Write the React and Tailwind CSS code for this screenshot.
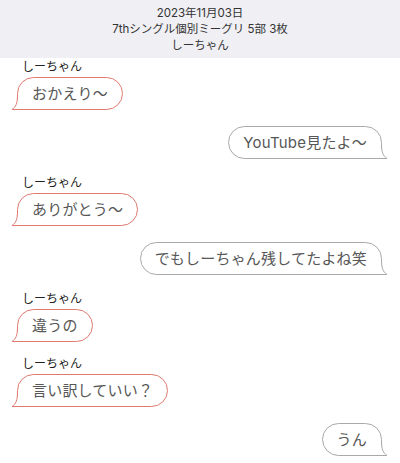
import React from "react";

const messages = [
  { from: "her", text: "おかえり〜" },
  { from: "me", text: "YouTube見たよ〜" },
  { from: "her", text: "ありがとう〜" },
  { from: "me", text: "でもしーちゃん残してたよね笑" },
  { from: "her", text: "違うの" },
  { from: "her", text: "言い訳していい？" },
  { from: "me", text: "うん" },
];

function Tail({ color, side }) {
  // flared corner that turns the pill's bottom corner into a speech tail
  const pos = side === "left" ? "left-[-7px]" : "right-[-7px] -scale-x-100";
  return (
    <svg
      className={`absolute bottom-[-1px] ${pos}`}
      width="10"
      height="15"
      viewBox="0 0 10 15"
    >
      <path d="M6.5 0 C6.5 8 5 12 1 14.5 L10 14.5 L10 0 Z" fill="white" />
      <path d="M6.5 0 C6.5 8 5 12 1 14.5 L10 14.5" fill="none" stroke={color} strokeWidth="1" />
    </svg>
  );
}

function Bubble({ from, text }) {
  const her = from === "her";
  const color = her ? "#df7a70" : "#a9a9a9";
  return (
    <div
      className={`relative border bg-white px-[14px] py-[6px] text-[15px] leading-[19px] tracking-[0.2px] text-[#575757] ${
        her
          ? "rounded-[17px] rounded-bl-none border-[#df7a70]"
          : "rounded-[17px] rounded-br-none border-[#a9a9a9]"
      }`}
    >
      {text}
      <Tail color={color} side={her ? "left" : "right"} />
    </div>
  );
}

export default function App() {
  return (
    <div
      className="w-[400px] h-[463px] overflow-hidden bg-white"
      style={{ fontFamily: 'Inter, "Noto Sans CJK JP", sans-serif' }}
    >
      {/* Header */}
      <div className="h-[58px] bg-[#efeff4] pt-[5px] text-center text-[11.5px] leading-[16px] text-[#333]">
        <div>2023年11月03日</div>
        <div>7thシングル個別ミーグリ 5部 3枚</div>
        <div>しーちゃん</div>
      </div>

      <div className="flex flex-col pt-[2px]">
        {messages.map((m, i) => {
          if (m.from === "her") {
            const afterMe = i > 0 && messages[i - 1].from === "me";
            return (
              <div
                key={i}
                className={`flex flex-col items-start pl-[17px] ${i === 0 ? "" : afterMe ? "mt-[17px]" : "mt-[15px]"}`}
              >
                <div className="pl-[5px] text-[12px] leading-[14px] text-[#222]">しーちゃん</div>
                <div className="mt-[3px]">
                  <Bubble {...m} />
                </div>
              </div>
            );
          }
          return (
            <div key={i} className="mt-[16px] flex justify-end pr-[18px]">
              <Bubble {...m} />
            </div>
          );
        })}
      </div>
    </div>
  );
}
